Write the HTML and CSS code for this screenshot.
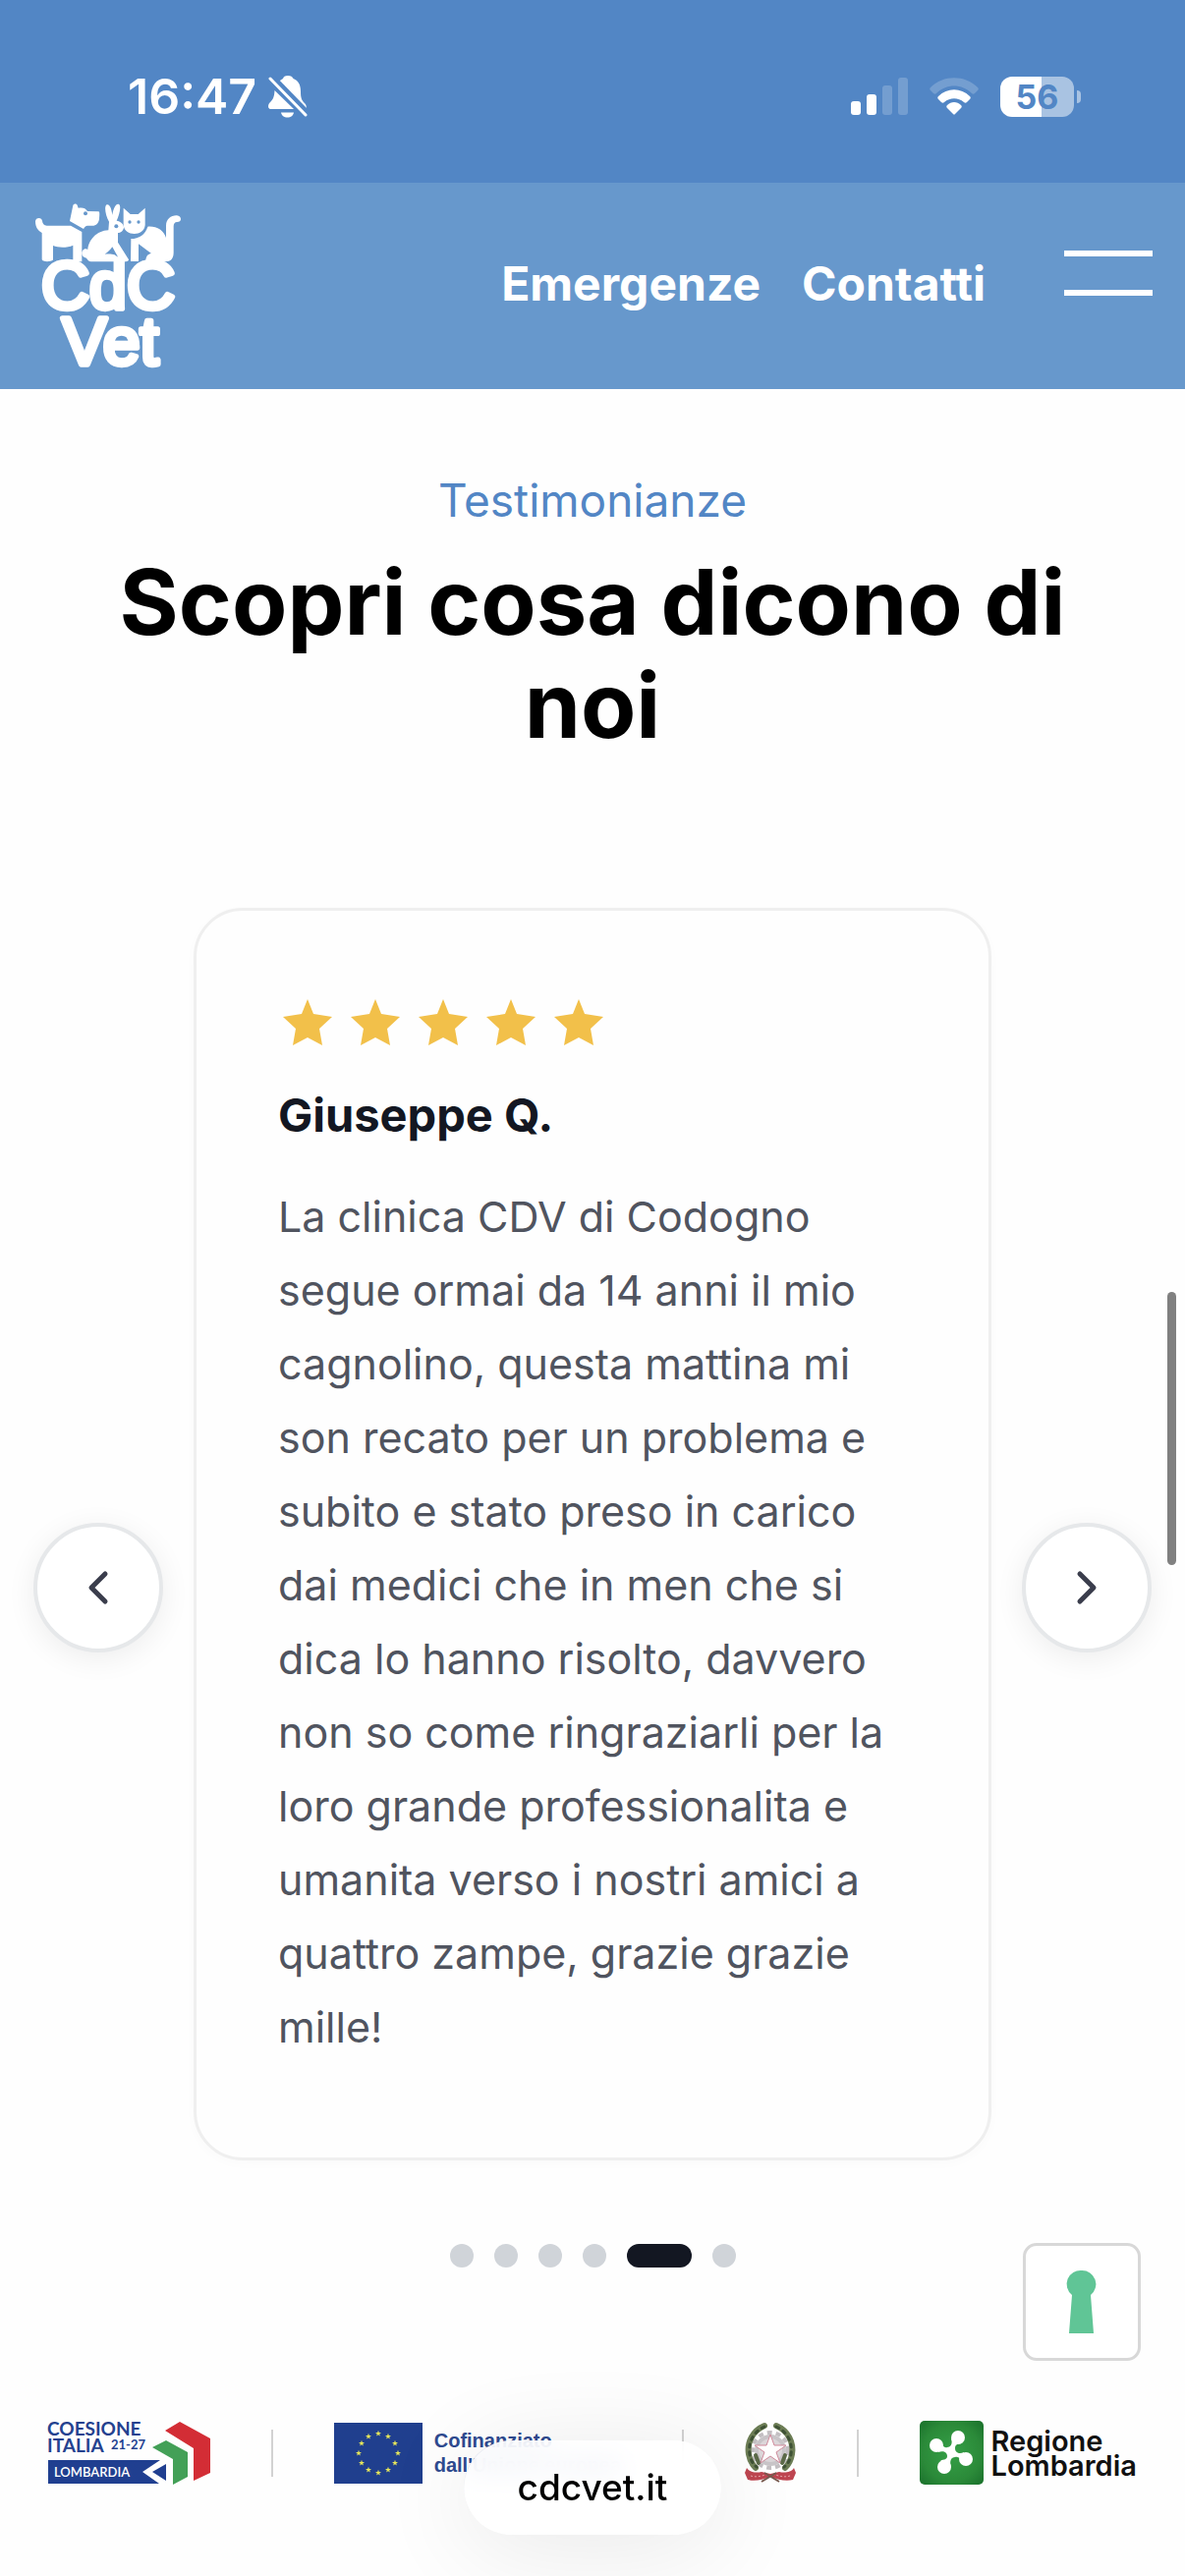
FILE: index.html
```html
<!DOCTYPE html>
<html lang="it">

<head>
    <meta charset="UTF-8">
    <meta name="viewport" content="width=device-width, initial-scale=1.0">
    <title>CdC Vet</title>
    <link rel="stylesheet" href="styles.css">
</head>

<body>
    <div class="status">
        <div class="status-left">
            <span class="time">16:47</span>
            <svg class="bell" width="40" height="43" viewBox="0 0 40 43">
                <path fill="#fff" d="M11 6C13 4 14 3.500 15 3C15.500 1 17 0 20 0s4.500 1 5.500 3C31 5 33 10 33 16c0 7 1 9 4 12 2 2 2 4 1.500 6z" />
                <path fill="#fff" d="M6.500 15C6 22 5 24 2 27c-3 3-2.500 7 1 7h23z" />
                <path fill="#fff" d="M13 37.500h13c-.5 3-3 5-6.500 5s-6-2-6.500-5z" />
                <path stroke="#5286c5" stroke-width="7" d="M4 2l36 37" />
                <path stroke="#fff" stroke-width="3" stroke-linecap="round" d="M2 3l36 37" />
            </svg>
        </div>
        <div class="status-right">
            <svg width="58" height="38" viewBox="0 0 58 38" fill="#fff">
                <rect x="0" y="24" width="10" height="14" rx="3" />
                <rect x="16" y="17" width="10" height="21" rx="3" />
                <rect x="32" y="8" width="10" height="30" rx="3" opacity=".2" />
                <rect x="48" y="0" width="10" height="38" rx="3" opacity=".2" />
            </svg>
            <svg width="50" height="38" viewBox="0 0 50 38" fill="#fff">
                <path opacity=".2" d="M1 10C14-3 36-3 49 10c1 1 1 2 0 3l-3 3c-1 1-2 1-3 0C33 6 17 6 7 16c-1 1-2 1-3 0l-3-3c-1-1-1-2 0-3z" />
                <path d="M9 19c9-9 23-9 32 0 1 1 1 2 0 3l-3 3c-1 1-2 1-3 0-6-5-14-5-20 0-1 1-2 1-3 0l-3-3c-1-1-1-2 0-3z" />
                <path d="M18 28c4-4 10-4 14 0 1 1 1 2 0 3l-6 6c-1 1-1 1-2 0l-6-6c-1-1-1-2 0-3z" />
            </svg>
            <div class="battery"><span>56</span></div>
        </div>
    </div>

    <header class="header">
        <a href="#" class="logo" aria-label="CdC Vet">
            <svg width="148" height="168" viewBox="48 54 444 504" fill="#fff">
                <!-- dog -->
                <path d="M163 60c3-6 11-6 13 0l3 8c12-2 22-1 28 10l34 1c4 0 3 12 2 22-2 14-9 21-21 21h-15c-4 0-8 2-12 10l-42-24z" />
                <path d="M48 109c0-12 20-14 21-1 1 8 5 14 14 14h73l34 19v91h-27v-50c-18 8-44 8-61 1v42c0 8-34 9-34 0V144c-12-6-20-18-20-35z" />
                <!-- rabbit -->
                <path d="M273 110c-10-18-15-42-9-51 9-6 16 7 19 30 4-24 13-37 21-31 7 6-1 34-8 49 12 2 23 11 22 21-2 11-10 15-18 16v29l33 53c0 8-25 9-27 2l-23-41c-6 8-14 16-23 22 18-2 37 0 38 11l-1 12h-79c-6-1-11-5-14-11-12-1-18-13-12-22 6-9 12-6 16-4 2-28 27-58 63-59z" />
                <!-- cat -->
                <path d="M317 68l21 19h24l21-19v52c-3 36-63 36-66 0z" />
                <path d="M340 162c24 0 44-13 51-37 28-2 49 12 56 34v-37c0-20 16-32 33-31 16 2 16 20 0 20-6 0-10 5-10 13v81c0 17-8 27-25 27h-60c0-15 5-23 17-25l-39-29v53h-24z" />
                <g fill="#6798cc">
                    <circle cx="201" cy="85" r="6" />
                    <circle cx="295" cy="124" r="6" />
                    <circle cx="336" cy="111" r="5" />
                    <circle cx="363" cy="111" r="5" />
                </g>
                <text class="logo-text" x="270" y="376" text-anchor="middle">CdC</text>
                <text class="logo-text" x="277" y="545" text-anchor="middle">Vet</text>
            </svg>
        </a>
        <nav class="nav">
            <a href="#">Emergenze</a>
            <a href="#">Contatti</a>
        </nav>
        <button class="menu" aria-label="Menu"><span></span><span></span></button>
    </header>

    <main>
        <section class="reviews">
            <p class="eyebrow">Testimonianze</p>
            <h2 class="title">Scopri cosa dicono di noi</h2>

            <div class="carousel">
                <button class="arrow" aria-label="Precedente">
                    <svg width="32" height="36" viewBox="0 0 32 36"><path d="M23 4L9 18l14 14" /></svg>
                </button>
                <div class="slides">
                    <article class="card">
                        <div class="stars">
                            <svg viewBox="0 0 60 60"><path d="M30 6l6 15 19 3-13 12 3 17-15-8-15 8 3-17L5 24l19-3z" /></svg>
                            <svg viewBox="0 0 60 60"><path d="M30 6l6 15 19 3-13 12 3 17-15-8-15 8 3-17L5 24l19-3z" /></svg>
                            <svg viewBox="0 0 60 60"><path d="M30 6l6 15 19 3-13 12 3 17-15-8-15 8 3-17L5 24l19-3z" /></svg>
                            <svg viewBox="0 0 60 60"><path d="M30 6l6 15 19 3-13 12 3 17-15-8-15 8 3-17L5 24l19-3z" /></svg>
                            <svg viewBox="0 0 60 60"><path d="M30 6l6 15 19 3-13 12 3 17-15-8-15 8 3-17L5 24l19-3z" /></svg>
                        </div>
                        <h3 class="name">Giuseppe Q.</h3>
                        <p class="text">La clinica CDV di Codogno segue ormai da 14 anni il mio cagnolino, questa mattina mi son recato per un problema e subito e stato preso in carico dai medici che in men che si dica lo hanno risolto, davvero non so come ringraziarli per la loro grande professionalita e umanita verso i nostri amici a quattro zampe, grazie grazie mille!</p>
                    </article>
                    <div class="dots">
                        <button aria-label="Recensione 1"></button>
                        <button aria-label="Recensione 2"></button>
                        <button aria-label="Recensione 3"></button>
                        <button aria-label="Recensione 4"></button>
                        <button class="active" aria-label="Recensione 5"></button>
                        <button aria-label="Recensione 6"></button>
                    </div>
                </div>
                <button class="arrow" aria-label="Successiva">
                    <svg width="32" height="36" viewBox="0 0 32 36"><path d="M9 4l14 14L9 32" /></svg>
                </button>
            </div>
        </section>

        <section class="partners">
            <svg width="165" height="64" viewBox="0 0 165 64">
                <g fill="#24418f" font-family="Lato, sans-serif" font-weight="700">
                    <text x="-1" y="14" font-size="19">COESIONE</text>
                    <text x="-1" y="31" font-size="19">ITALIA</text>
                    <text x="64" y="28" font-size="13">21-27</text>
                </g>
                <path fill="#203f90" d="M0 39h114L96 51l17 12H0z" />
                <path fill="#203f90" d="M120 43v17l-14-9z" />
                <text x="6" y="56" font-size="13" font-weight="600" font-family="Lato, sans-serif" fill="#fff">LOMBARDIA</text>
                <path fill="#43a057" d="M120 19l22 12v25l-15 8V38l-21-12z" />
                <path fill="#d32d35" d="M134 0l31 17v35l-17 8V27L119 9z" />
            </svg>
            <span class="line"></span>
            <div class="eu">
                <svg width="90" height="62" viewBox="0 0 90 62">
                    <defs>
                        <path id="s" fill="#e6e65a" d="M0-3.200L.8-1H3L1.200.4 1.900 2.600 0 1.300-1.900 2.600-1.200.4-3-1H-.8z" />
                    </defs>
                    <rect width="90" height="62" fill="#203f8e" />
                    <use href="#s" x="45" y="11" />
                    <use href="#s" x="55" y="14" />
                    <use href="#s" x="62" y="21" />
                    <use href="#s" x="65" y="31" />
                    <use href="#s" x="62" y="41" />
                    <use href="#s" x="55" y="48" />
                    <use href="#s" x="45" y="51" />
                    <use href="#s" x="35" y="48" />
                    <use href="#s" x="28" y="41" />
                    <use href="#s" x="25" y="31" />
                    <use href="#s" x="28" y="21" />
                    <use href="#s" x="35" y="14" />
                </svg>
                <p>Cofinanziato<br>dall'Unione europea</p>
            </div>
            <span class="line"></span>
            <svg width="52" height="62" viewBox="0 0 52 62">
                <circle cx="26" cy="28" r="16" fill="#c9c5c8" />
                <circle cx="26" cy="28" r="18" fill="none" stroke="#c3bfc2" stroke-width="4" stroke-dasharray="5 4" />
                <circle cx="26" cy="28" r="12" fill="#dcd7da" />
                <g fill="none" stroke-linecap="round">
                    <path stroke="#6c7d55" stroke-width="6" d="M20 3C8 8 2 20 4 32c1 6 3 10 7 14" />
                    <path stroke="#6c7d55" stroke-width="6" d="M32 3c12 5 18 17 16 29-1 6-3 10-7 14" />
                    <path stroke="#3f5236" stroke-width="3" stroke-dasharray="3 5" d="M20 4C9 9 3 20 5 32c1 6 3 10 7 13M32 4c11 5 17 16 15 28-1 6-3 10-7 13" />
                    <path stroke="#5b6a48" stroke-width="4" d="M11 33l3 8M41 33l-3 8" />
                </g>
                <path fill="#fff" stroke="#d08b9c" stroke-width="1" d="M26 12l4 11 12 0-10 7 4 11-10-7-10 7 4-11-10-7h12z" />
                <path fill="#be4550" d="M2 46c3 5 10 5 15 4l9 2 9-2c5 1 12 1 15-4l2 5-3 7c-7 2-15 0-23-3-8 3-16 5-23 3l-3-7z" />
                <path fill="none" stroke="#e6a4a8" stroke-width="1" stroke-dasharray="2 2" d="M6 54c6 2 12 0 18-2M46 54c-6 2-12 0-18-2" />
                <path stroke="#77594e" stroke-width="2" d="M20 51l15 9M32 51l-15 9" />
            </svg>
            <span class="line"></span>
            <div class="regione">
                <svg width="65" height="65" viewBox="0 0 65 65">
                    <defs>
                        <radialGradient id="g" r=".75">
                            <stop offset="0" stop-color="#35a047" />
                            <stop offset=".6" stop-color="#2b8a39" />
                            <stop offset="1" stop-color="#176b29" />
                        </radialGradient>
                    </defs>
                    <rect width="65" height="65" rx="5" fill="url(#g)" />
                    <g fill="#fff">
                        <circle cx="39" cy="17" r="7" />
                        <circle cx="17" cy="25" r="7" />
                        <circle cx="47" cy="39" r="7" />
                        <circle cx="25" cy="47" r="7" />
                        <path d="M32 18c2 6-1 9-4 9-3 1-5-2-6-6l-3 11c5-2 9 0 9 4 0 3-3 4-7 4l11 7c-2-6 0-10 4-10 3-1 6 1 7 6l2-11c-4 2-9 1-9-4 0-4 3-5 8-5z" />
                    </g>
                </svg>
                <p>Regione<br>Lombardia</p>
            </div>
        </section>
    </main>

    <button class="privacy" aria-label="Preferenze privacy">
        <svg width="30" height="64" viewBox="0 0 30 64"><path fill="#60c596" d="M15 0a14 14 0 0 1 9 25l3 39H2l3-39A14 14 0 0 1 15 0z" /></svg>
    </button>
    <div class="scrollbar"></div>
    <a href="#" class="url">cdcvet.it</a>
</body>

</html>
```

FILE: styles.css
```css
* {
    margin: 0;
    padding: 0;
    box-sizing: border-box;
}

body {
    background-color: #fefefe;
    font-family: Inter, "Liberation Sans", sans-serif;
}

button {
    border: none;
    background: none;
    cursor: pointer;
}

a {
    color: inherit;
    text-decoration: none;
}

svg {
    display: block;
    flex-shrink: 0;
    overflow: visible;
}

/* status bar */
.status {
    display: flex;
    justify-content: space-between;
    align-items: center;
    padding: 64px 113px 54px 130px;
    height: 186px;
    background-color: #5286c5;
    color: #fff;
}

.status-left {
    display: flex;
    align-items: center;
    gap: 12px;
}

.bell {
    overflow: hidden;
}

.time {
    font-size: 50px;
    font-weight: 600;
    line-height: 60px;
}

.status-right {
    display: flex;
    align-items: center;
    gap: 22px;
}

.battery {
    position: relative;
    width: 75px;
    height: 41px;
    border-radius: 12px;
    background: linear-gradient(to right, #fff 56%, #a9c3e2 56%);
    color: #5286c5;
    font-size: 34px;
    font-weight: 700;
    line-height: 41px;
    text-align: center;
}

.battery::after {
    content: "";
    position: absolute;
    left: 78px;
    top: 14px;
    width: 4px;
    height: 13px;
    border-radius: 0 6px 6px 0;
    background-color: #a9c3e2;
}

/* header */
.header {
    display: flex;
    align-items: center;
    height: 210px;
    padding: 0 33px 0 36px;
    background-color: #6798cc;
    color: #fff;
}

.logo-text {
    font-family: "Liberation Sans", Arial, sans-serif;
    font-size: 204px;
    stroke: #fff;
    stroke-width: 16px;
    stroke-linejoin: round;
}

.nav {
    display: flex;
    gap: 42px;
    margin-left: auto;
    padding-bottom: 4px;
    font-size: 48px;
    font-weight: 700;
    line-height: 60px;
}

.menu {
    display: flex;
    flex-direction: column;
    gap: 34px;
    width: 90px;
    margin-left: 80px;
    padding-bottom: 26px;
}

.menu span {
    height: 6px;
    background-color: #fff;
}

/* reviews */
.reviews {
    padding: 80px 34px 0;
}

.eyebrow {
    color: #5286c5;
    font-size: 46px;
    line-height: 66px;
    text-align: center;
}

.title {
    margin-top: 18px;
    padding: 0 60px;
    color: #000;
    font-size: 92px;
    font-weight: 700;
    line-height: 105px;
    text-align: center;
}

.carousel {
    display: flex;
    align-items: center;
    gap: 31px;
    margin-top: 154px;
}

.slides {
    flex: 1;
}

.card {
    padding: 84px 83px 95px;
    background-color: #fefefe;
    border: 3px solid #efefef;
    border-radius: 50px;
    box-shadow: 0 3px 12px rgba(0, 0, 0, 0.02);
}

.stars {
    display: flex;
    gap: 9px;
}

.stars svg {
    width: 60px;
    height: 60px;
    fill: #f2c04a;
}

.name {
    margin-top: 34px;
    color: #131722;
    font-size: 47px;
    font-weight: 700;
    line-height: 60px;
}

.text {
    margin-top: 36px;
    color: #50545f;
    font-size: 43px;
    line-height: 75px;
}

.dots {
    display: flex;
    justify-content: center;
    gap: 21px;
    margin-top: 85px;
}

.dots button {
    width: 24px;
    height: 24px;
    border-radius: 12px;
    background-color: #d0d4d9;
}

.dots .active {
    width: 66px;
    background-color: #131722;
}

.arrow {
    display: flex;
    justify-content: center;
    align-items: center;
    flex-shrink: 0;
    width: 132px;
    height: 132px;
    border: 4px solid #e6e8ea;
    border-radius: 50%;
    background-color: #fff;
    box-shadow: 0 6px 30px rgba(0, 0, 0, 0.07);
}

.arrow path {
    fill: none;
    stroke: #3a3d4c;
    stroke-width: 5;
    stroke-linecap: round;
    stroke-linejoin: round;
}

/* partner logos */
.partners {
    display: flex;
    justify-content: space-between;
    align-items: center;
    margin-top: 156px;
    padding: 0 49px 93px;
}

.line {
    width: 2px;
    height: 48px;
    background-color: #d2d2d2;
}

.eu {
    display: flex;
    align-items: center;
    gap: 12px;
    color: #2f4a90;
    font-family: "Liberation Sans", Arial, sans-serif;
    font-size: 20px;
    font-weight: 700;
    line-height: 25px;
    white-space: nowrap;
}

.regione {
    display: flex;
    align-items: center;
    gap: 8px;
    color: #111;
    font-size: 29px;
    font-weight: 600;
    line-height: 25px;
}

/* floating elements */
.privacy {
    position: fixed;
    right: 45px;
    bottom: 219px;
    display: flex;
    justify-content: center;
    align-items: center;
    width: 120px;
    height: 120px;
    border: 3px solid #d8d8d8;
    border-radius: 14px;
    background-color: #fff;
}

.scrollbar {
    position: fixed;
    right: 9px;
    top: 1315px;
    width: 9px;
    height: 278px;
    border-radius: 5px;
    background-color: #808080;
}

.url {
    position: fixed;
    left: 50%;
    bottom: 42px;
    transform: translateX(-50%);
    padding: 0 54px;
    border-radius: 48px;
    background-color: rgba(255, 255, 255, 0.85);
    backdrop-filter: blur(14px);
    box-shadow: 0 12px 100px rgba(0, 0, 0, 0.09);
    color: #000;
    font-size: 37px;
    font-weight: 500;
    line-height: 96px;
}
```
